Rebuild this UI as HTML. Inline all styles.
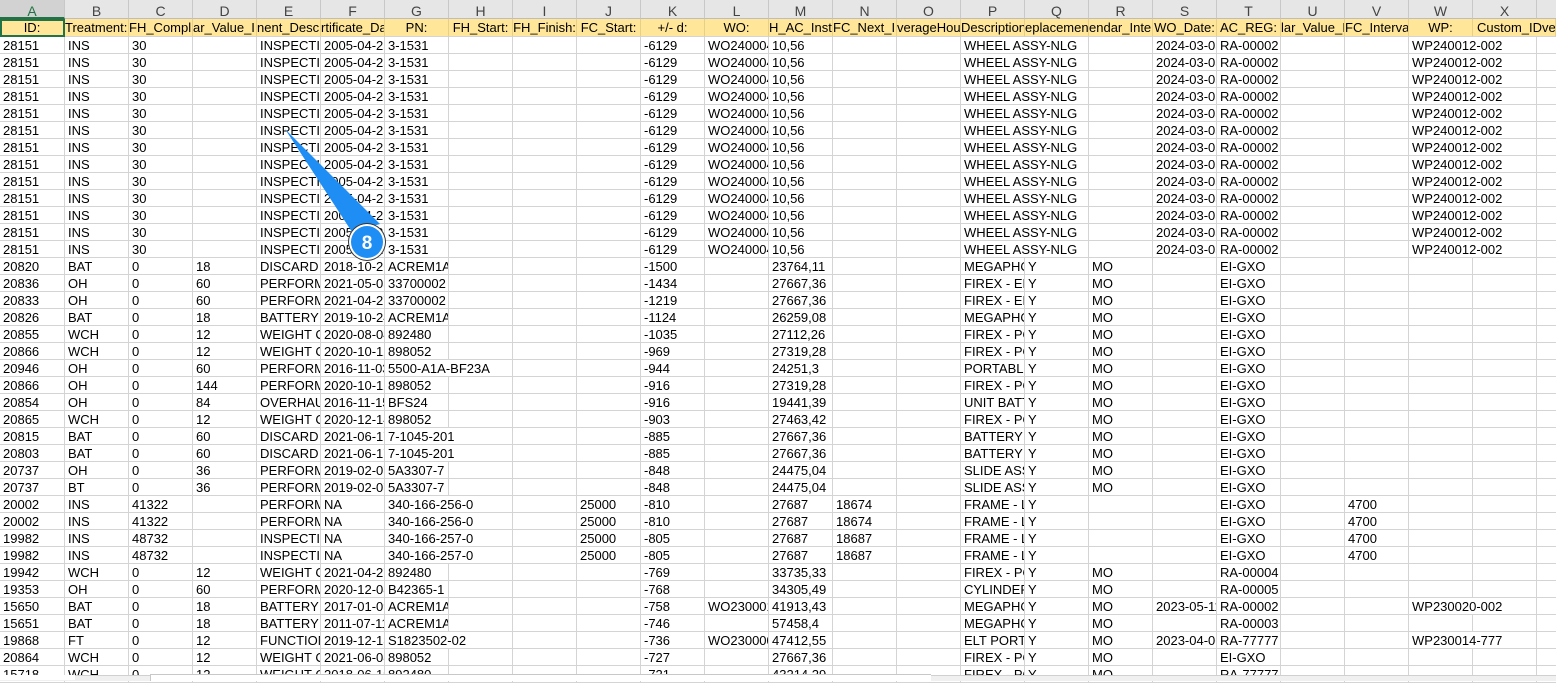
<!DOCTYPE html>
<html><head><meta charset="utf-8">
<style>
html,body{margin:0;padding:0;width:1556px;height:680px;overflow:hidden;background:#fff;font-family:"Liberation Sans",Arial,sans-serif;}
#g{position:absolute;left:0;top:0;width:1556px;height:680px;}
.c{position:absolute;height:17px;line-height:17px;font-size:13px;color:#000;white-space:nowrap;overflow:hidden;box-sizing:border-box;padding-left:3px;border-right:1px solid #d4d4d4;border-bottom:1px solid #d4d4d4;background:#fff;}
.h{position:absolute;top:0;height:19px;line-height:22px;font-size:14px;color:#444;text-align:center;background:#e6e6e6;border-right:1px solid #c8c8c8;border-bottom:1px solid #bdbdbd;box-sizing:border-box;}
.y{position:absolute;top:19px;height:18px;line-height:18px;font-size:13px;color:#000;background:#ffe699;white-space:nowrap;overflow:hidden;display:flex;justify-content:center;border-right:1px solid #e5cf8a;border-bottom:1px solid #d4d4d4;box-sizing:border-box;}
</style></head><body>
<div id="g"></div>
<svg style="position:absolute;left:0;top:0" width="1556" height="680">
<polygon points="285,129 352,232 380,224" fill="#1e8ef5"/>
<circle cx="367" cy="242" r="19" fill="#333"/>
<circle cx="367" cy="242" r="18" fill="#fff"/>
<circle cx="367" cy="242" r="16" fill="#1e8ef5"/>
<text x="367" y="249" text-anchor="middle" font-family="Liberation Sans,Arial,sans-serif" font-weight="bold" font-size="19" fill="#fff">8</text>
</svg>
<div style="position:absolute;left:0;top:675px;width:1556px;height:5px;background:#f0f0f0;border-top:1px solid #d0d0d0"></div>
<div style="position:absolute;left:0;top:675px;width:75px;height:5px;background:#fff"></div>
<div style="position:absolute;left:150px;top:674px;width:780px;height:6px;background:#fff;border-left:1px solid #c8c8c8;border-top:1px solid #c8c8c8"></div>
<script>
(function(){
var g=document.getElementById('g');
var L='ABCDEFGHIJKLMNOPQRSTUVWX'.split('');
function x(i){return i==0?0:65+(i-1)*64;}
function w(i){return i==0?65:64;}
var html='';
for(var i=0;i<25;i++){
 var st=i==0?'background:#d2d2d2;color:#217346;border-bottom:2px solid #217346;':'';
 html+='<div class="h" style="left:'+x(i)+'px;width:'+w(i)+'px;'+st+'">'+(L[i]||'')+'</div>';
}
var hd=['ID:','Treatment:','FH_Compl:','ar_Value_I','nent_Descr','rtificate_Da','PN:','FH_Start:','FH_Finish:','FC_Start:','+/- d:','WO:','H_AC_Insta','FC_Next_I','verageHour','Description','eplacemen','endar_Inter','WO_Date:','AC_REG:','lar_Value_I','FC_Interval','WP:','Custom_IDver',''];
for(var i=0;i<25;i++){
 var jc=(i==2||i==3||i==4||i==5||i==12||i==13||i==14||i==15||i==16||i==17||i==20||i==21)?'flex-start':'center';
 if(i==1)jc='flex-start';
 var ww=w(i),ex='';
 if(i==23){jc='flex-start';ww=83;ex='padding-left:4px;z-index:2;';}
 var bd=i==0?'outline:2px solid #217346;outline-offset:-2px;':'';
 html+='<div class="y" style="left:'+x(i)+'px;width:'+ww+'px;justify-content:'+jc+';'+bd+ex+'">'+hd[i]+'</div>';
}
var R=[];
for(var k=0;k<13;k++)R.push(['28151','INS','30','','INSPECTION','2005-04-25','3-1531','','','','-6129','WO240004','10,56','','','WHEEL ASSY-NLG','','','2024-03-05','RA-00002','','','WP240012-002']);
function r(a,b,c,d,e,f,gg,k,m,p,t,extra){var row=[a,b,c,d,e,f,gg,'','','',k,'',m,'','',p,'Y','MO','',t,'','',''];if(extra)for(var q in extra)row[q]=extra[q];R.push(row);}
r('20820','BAT','0','18','DISCARD','2018-10-26','ACREM1A','-1500','23764,11','MEGAPHONE','EI-GXO');
r('20836','OH','0','60','PERFORM','2021-05-05','33700002','-1434','27667,36','FIREX - EN','EI-GXO');
r('20833','OH','0','60','PERFORM','2021-04-27','33700002','-1219','27667,36','FIREX - EN','EI-GXO');
r('20826','BAT','0','18','BATTERY','2019-10-24','ACREM1A','-1124','26259,08','MEGAPHONE','EI-GXO');
r('20855','WCH','0','12','WEIGHT CH','2020-08-04','892480','-1035','27112,26','FIREX - PO','EI-GXO');
r('20866','WCH','0','12','WEIGHT CH','2020-10-12','898052','-969','27319,28','FIREX - PO','EI-GXO');
r('20946','OH','0','60','PERFORM','2016-11-03','5500-A1A-BF23A','-944','24251,3','PORTABLE','EI-GXO');
r('20866','OH','0','144','PERFORM','2020-10-12','898052','-916','27319,28','FIREX - PO','EI-GXO');
r('20854','OH','0','84','OVERHAUL','2016-11-15','BFS24','-916','19441,39','UNIT BATT','EI-GXO');
r('20865','WCH','0','12','WEIGHT CH','2020-12-14','898052','-903','27463,42','FIREX - PO','EI-GXO');
r('20815','BAT','0','60','DISCARD','2021-06-17','7-1045-201','-885','27667,36','BATTERY','EI-GXO');
r('20803','BAT','0','60','DISCARD','2021-06-17','7-1045-201','-885','27667,36','BATTERY','EI-GXO');
r('20737','OH','0','36','PERFORM','2019-02-07','5A3307-7','-848','24475,04','SLIDE ASSY','EI-GXO');
r('20737','BT','0','36','PERFORM','2019-02-07','5A3307-7','-848','24475,04','SLIDE ASSY','EI-GXO');
r('20002','INS','41322','','PERFORM','NA','340-166-256-0','-810','27687','FRAME - LH','EI-GXO',{9:'25000',13:'18674',17:'',21:'4700'});
r('20002','INS','41322','','PERFORM','NA','340-166-256-0','-810','27687','FRAME - LH','EI-GXO',{9:'25000',13:'18674',17:'',21:'4700'});
r('19982','INS','48732','','INSPECTION','NA','340-166-257-0','-805','27687','FRAME - LH','EI-GXO',{9:'25000',13:'18687',17:'',21:'4700'});
r('19982','INS','48732','','INSPECTION','NA','340-166-257-0','-805','27687','FRAME - LH','EI-GXO',{9:'25000',13:'18687',17:'',21:'4700'});
r('19942','WCH','0','12','WEIGHT CH','2021-04-27','892480','-769','33735,33','FIREX - PO','RA-00004');
r('19353','OH','0','60','PERFORM','2020-12-08','B42365-1','-768','34305,49','CYLINDER','RA-00005');
r('15650','BAT','0','18','BATTERY','2017-01-09','ACREM1A','-758','41913,43','MEGAPHONE','RA-00002',{11:'WO230001',18:'2023-05-11',22:'WP230020-002'});
r('15651','BAT','0','18','BATTERY','2011-07-11','ACREM1A','-746','57458,4','MEGAPHONE','RA-00003');
r('19868','FT','0','12','FUNCTION','2019-12-13','S1823502-02','-736','47412,55','ELT PORT','RA-77777',{11:'WO230000',18:'2023-04-06',22:'WP230014-777'});
r('20864','WCH','0','12','WEIGHT CH','2021-06-08','898052','-727','27667,36','FIREX - PO','EI-GXO');
r('15718','WCH','0','12','WEIGHT CH','2018-06-19','892480','-721','43214,29','FIREX - PO','RA-77777');
for(var ri=0;ri<R.length;ri++){
 var row=R[ri],yy=37+ri*17;
 for(var i=0;i<25;i++){
  if(row[i]===null)continue;
  var v=row[i]||'';
  var wd=w(i);
  if(v){var j=i+1;while(j<25&&!(row[j])){var tw=v.length*7.3;if(tw<=wd-4)break;wd+=64;j++;}
   for(var q=i+1;q<j;q++)row[q]=null;
  }
  html+='<div class="c" style="left:'+x(i)+'px;top:'+yy+'px;width:'+wd+'px">'+v+'</div>';
 }
}
g.innerHTML=html;
})();
</script>
</body></html>
